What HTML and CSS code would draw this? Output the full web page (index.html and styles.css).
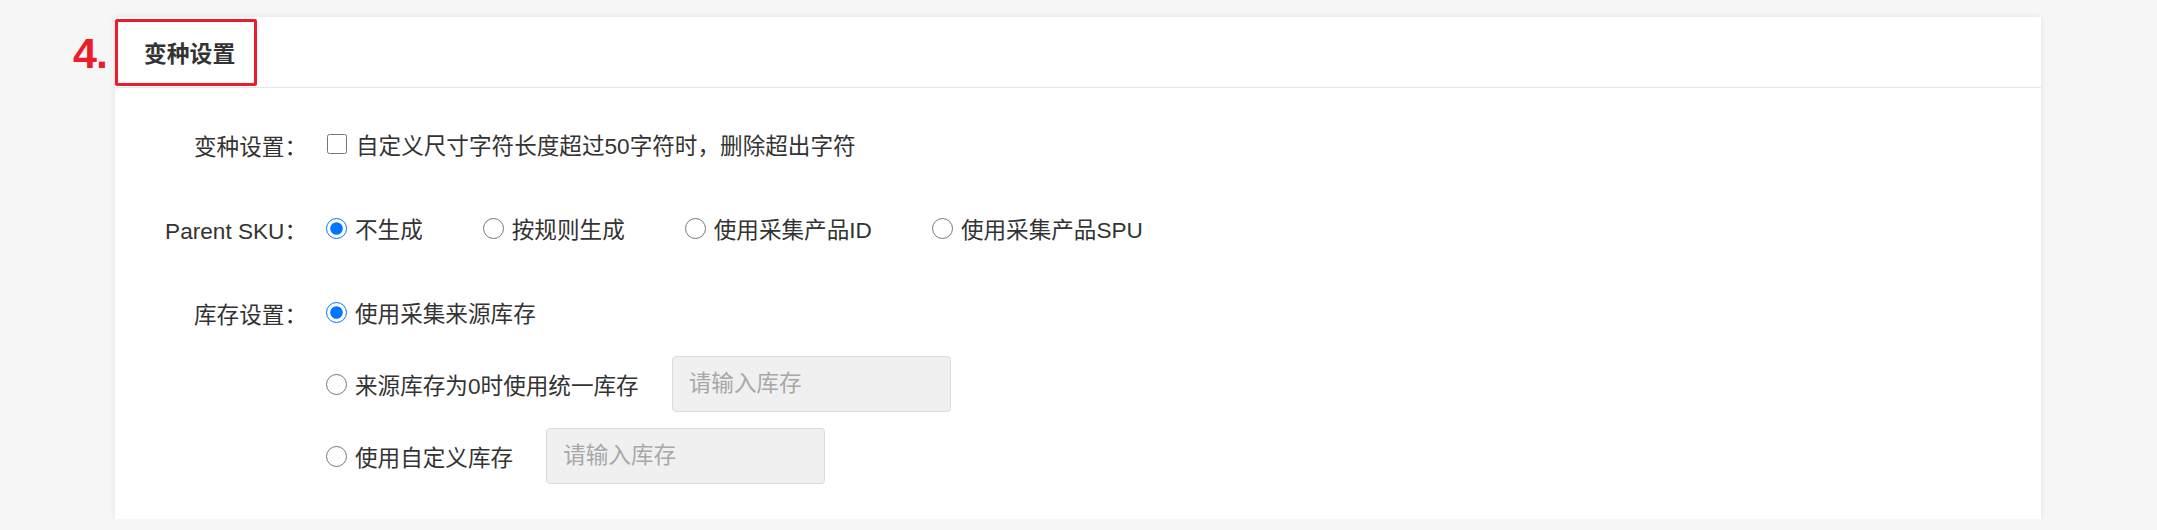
FILE: index.html
```html
<!DOCTYPE html>
<html lang="zh-CN">
<head>
<meta charset="utf-8">
<title>变种设置</title>
<link rel="stylesheet" href="styles.css">
</head>
<body>
<div class="page">
  <section class="card">
    <span class="annot-num">4.</span>
    <div class="annot-box"></div>
    <header class="card-head"><h2 class="card-title">变种设置</h2></header>
    <div class="card-body">
      <div class="form-item">
        <div class="form-label">变种设置：</div>
        <div class="form-control">
          <label class="opt opt-check"><input type="checkbox" class="chk"><span>自定义尺寸字符长度超过50字符时，删除超出字符</span></label>
        </div>
      </div>
      <div class="form-item">
        <div class="form-label">Parent SKU：</div>
        <div class="form-control radios">
          <label class="opt"><input type="radio" name="psku" class="rad" checked><span>不生成</span></label>
          <label class="opt"><input type="radio" name="psku" class="rad"><span>按规则生成</span></label>
          <label class="opt"><input type="radio" name="psku" class="rad"><span>使用采集产品ID</span></label>
          <label class="opt"><input type="radio" name="psku" class="rad"><span>使用采集产品SPU</span></label>
        </div>
      </div>
      <div class="form-item">
        <div class="form-label">库存设置：</div>
        <div class="form-control stack">
          <div class="line"><label class="opt"><input type="radio" name="stock" class="rad" checked><span>使用采集来源库存</span></label></div>
          <div class="line"><label class="opt"><input type="radio" name="stock" class="rad"><span>来源库存为0时使用统一库存</span></label><input type="text" class="txt" placeholder="请输入库存"></div>
          <div class="line"><label class="opt"><input type="radio" name="stock" class="rad"><span>使用自定义库存</span></label><input type="text" class="txt" placeholder="请输入库存"></div>
        </div>
      </div>
    </div>
  </section>
</div>
</body>
</html>
```

FILE: styles.css
```css
html, body {
  margin: 0;
  padding: 0;
  background: #f6f6f6;
}
body {
  font-family: "Liberation Sans", "Noto Sans CJK SC", sans-serif;
  font-size: 22.6px;
  color: #333;
}
.page {
  padding: 17px 0 0 115px;
  width: 1926px;
}
.card {
  position: relative;
  background: #fff;
  box-shadow: 0 0 6px rgba(0, 0, 0, 0.09);
}
.annot-num {
  position: absolute;
  left: -42px;
  top: 15px;
  font-family: "Liberation Sans", sans-serif;
  font-weight: bold;
  font-size: 43px;
  line-height: 43px;
  color: #ec1c2a;
  letter-spacing: -1px;
}
.annot-box {
  position: absolute;
  left: 0;
  top: 2px;
  width: 142px;
  height: 67px;
  box-sizing: border-box;
  border: 3px solid #ec1c2a;
  border-radius: 2px;
}
.card-head {
  height: 70px;
  border-bottom: 1px solid #e6e6e6;
  display: flex;
  align-items: center;
  padding-left: 29px;
}
.card-title {
  margin: 0;
  font-size: 22.8px;
  font-weight: bold;
  color: #333;
}
.card-body {
  padding: 28px 0 35px;
  display: flex;
  flex-direction: column;
  gap: 28px;
}
.form-item {
  display: flex;
  align-items: flex-start;
}
.form-label {
  width: 192px;
  margin-right: 19px;
  text-align: right;
  line-height: 56px;
  padding-top: 4px;
  height: 52px;
  white-space: nowrap;
  color: #333;
}
.form-control {
  display: flex;
  align-items: center;
  min-height: 56px;
}
.radios {
  gap: 60px;
}
.stack {
  flex-direction: column;
  align-items: flex-start;
  gap: 16px;
}
.line {
  display: flex;
  align-items: center;
  height: 56px;
  gap: 33px;
}
.opt {
  display: flex;
  align-items: center;
  white-space: nowrap;
}
.rad {
  width: 21px;
  height: 21px;
  margin: 0 8px 0 0;
}
.chk {
  width: 20px;
  height: 20px;
  margin: 0 9px 0 1px;
}
.txt {
  width: 279px;
  height: 56px;
  box-sizing: border-box;
  background: #f0f0f0;
  border: 1px solid #dcdcdc;
  border-radius: 4px;
  padding: 0 16px;
  font-family: "Liberation Sans", "Noto Sans CJK SC", sans-serif;
  font-size: 22.6px;
  color: #333;
}
.txt::placeholder {
  color: #a8a8a8;
}
```
